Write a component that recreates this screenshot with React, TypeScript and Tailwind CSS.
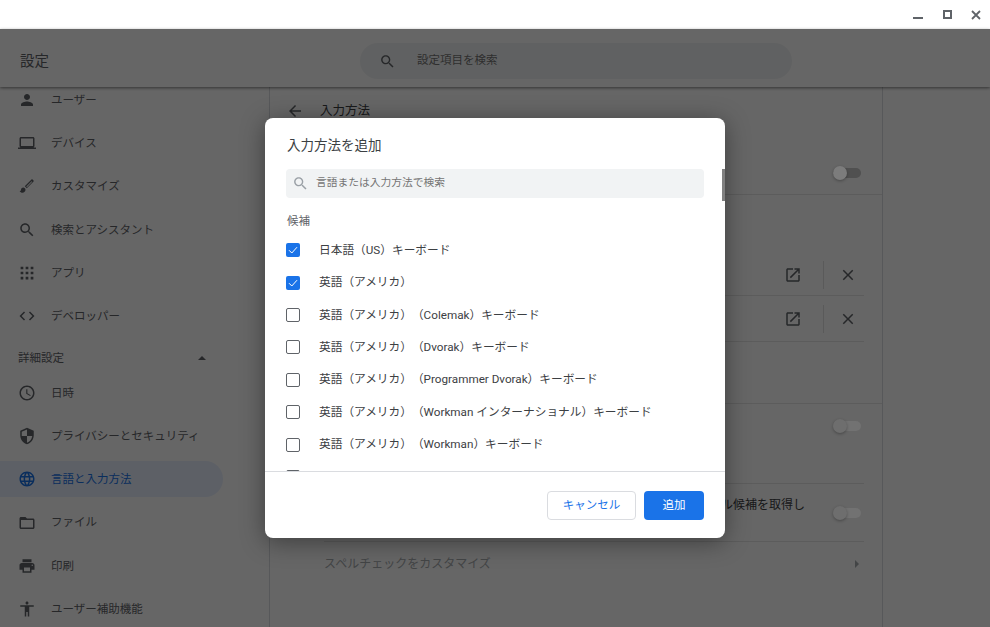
const FONT = "font-[Roboto,'Noto_Sans_CJK_JP',sans-serif] [text-spacing-trim:space-all]"

const paths = {
  person: 'M12 12c2.21 0 4-1.79 4-4s-1.79-4-4-4-4 1.79-4 4 1.79 4 4 4zm0 2c-2.67 0-8 1.34-8 4v2h16v-2c0-2.66-5.33-4-8-4z',
  laptop: 'M20 18c1.1 0 1.99-.9 1.99-2L22 6c0-1.1-.9-2-2-2H4c-1.1 0-2 .9-2 2v10c0 1.1.9 2 2 2H0v2h24v-2h-4zM4 6h16v10H4V6z',
  brush: 'M7 14c-1.66 0-3 1.34-3 3 0 1.31-1.16 2-2 2 .92 1.22 2.49 2 4 2 2.21 0 4-1.79 4-4 0-1.66-1.34-3-3-3zm13.71-9.37l-1.34-1.34c-.39-.39-1.02-.39-1.41 0L9 12.25 11.75 15l8.96-8.96c.39-.39.39-1.02 0-1.41zM11.1 12.8l.8.8 7.1-7.2-.8-.8z',
  search: 'M15.5 14h-.79l-.28-.27C15.41 12.59 16 11.11 16 9.5 16 5.91 13.09 3 9.5 3S3 5.91 3 9.5 5.91 16 9.5 16c1.61 0 3.09-.59 4.23-1.57l.27.28v.79l5 4.99L20.49 19l-4.99-5zm-6 0C7.01 14 5 11.99 5 9.5S7.01 5 9.5 5 14 7.01 14 9.5 11.99 14 9.5 14z',
  code: 'M9.4 16.6L4.8 12l4.6-4.6L8 6l-6 6 6 6 1.4-1.4zm5.2 0l4.6-4.6-4.6-4.6L16 6l6 6-6 6-1.4-1.4z',
  clock: 'M11.99 2C6.47 2 2 6.48 2 12s4.47 10 9.99 10C17.52 22 22 17.52 22 12S17.52 2 11.99 2zM12 20c-4.42 0-8-3.58-8-8s3.58-8 8-8 8 3.58 8 8-3.58 8-8 8zm.5-13H11v6l5.25 3.15.75-1.23-4.5-2.67z',
  shield: 'M12 1L3 5v6c0 5.55 3.84 10.74 9 12 5.16-1.26 9-6.45 9-12V5l-9-4zm0 10.99h7c-.53 4.12-3.28 7.79-7 8.94V12H5V6.3l7-3.11v8.8z',
  globe: 'M11.99 2C6.47 2 2 6.48 2 12s4.47 10 9.99 10C17.52 22 22 17.52 22 12S17.52 2 11.99 2zm6.93 6h-2.95c-.32-1.25-.78-2.45-1.38-3.56 1.84.63 3.37 1.91 4.33 3.56zM12 4.04c.83 1.2 1.48 2.53 1.91 3.96h-3.82c.43-1.43 1.08-2.76 1.91-3.96zM4.26 14C4.1 13.36 4 12.69 4 12s.1-1.36.26-2h3.38c-.08.66-.14 1.32-.14 2 0 .68.06 1.34.14 2H4.26zm.82 2h2.95c.32 1.25.78 2.45 1.38 3.56-1.84-.63-3.37-1.9-4.33-3.56zm2.95-8H5.08c.96-1.66 2.49-2.93 4.33-3.56C8.81 5.55 8.35 6.75 8.03 8zM12 19.96c-.83-1.2-1.48-2.53-1.91-3.96h3.82c-.43 1.43-1.08 2.76-1.91 3.96zM14.34 14H9.66c-.09-.66-.16-1.32-.16-2 0-.68.07-1.35.16-2h4.68c.09.65.16 1.32.16 2 0 .68-.07 1.34-.16 2zm.25 5.56c.6-1.11 1.06-2.31 1.38-3.56h2.95c-.96 1.65-2.49 2.93-4.33 3.56zM16.36 14c.08-.66.14-1.32.14-2 0-.68-.06-1.34-.14-2h3.38c.16.64.26 1.31.26 2s-.1 1.36-.26 2h-3.38z',
  folder: 'M20 6h-8l-2-2H4c-1.1 0-1.99.9-1.99 2L2 18c0 1.1.9 2 2 2h16c1.1 0 2-.9 2-2V8c0-1.1-.9-2-2-2zm0 12H4V8h16v10z',
  print: 'M19 8H5c-1.66 0-3 1.34-3 3v6h4v4h12v-4h4v-6c0-1.66-1.34-3-3-3zm-3 11H8v-5h8v5zm3-7c-.55 0-1-.45-1-1s.45-1 1-1 1 .45 1 1-.45 1-1 1zm-1-9H6v4h12V3z',
  access: 'M12 2c1.1 0 2 .9 2 2s-.9 2-2 2-2-.9-2-2 .9-2 2-2zm9 7h-6v13h-2v-6h-2v6H9V9H3V7h18v2z',
  open: 'M19 19H5V5h7V3H5c-1.11 0-2 .9-2 2v14c0 1.1.89 2 2 2h14c1.1 0 2-.9 2-2v-7h-2v7zM14 3v2h3.59l-9.83 9.83 1.41 1.41L19 6.41V10h2V3h-7z',
  close: 'M19 6.41L17.59 5 12 10.59 6.41 5 5 6.41 10.59 12 5 17.59 6.41 19 12 13.41 17.59 19 19 17.59 13.41 12z',
  back: 'M20 11H7.83l5.59-5.59L12 4l-8 8 8 8 1.41-1.41L7.83 13H20v-2z',
  apps: 'M3.5 3.5h3.6v3.6H3.5zM10.2 3.5h3.6v3.6h-3.6zM16.9 3.5h3.6v3.6h-3.6zM3.5 10.2h3.6v3.6H3.5zM10.2 10.2h3.6v3.6h-3.6zM16.9 10.2h3.6v3.6h-3.6zM3.5 16.9h3.6v3.6H3.5zM10.2 16.9h3.6v3.6h-3.6zM16.9 16.9h3.6v3.6h-3.6z',
}

type IconName = keyof typeof paths

const Icon = ({ name, className }: { name: IconName; className: string }) => (
  <svg viewBox="0 0 24 24" fill="currentColor" className={className}>
    <path fillRule="evenodd" d={paths[name]} />
  </svg>
)

const topNav: { icon: IconName; label: string }[] = [
  { icon: 'person', label: 'ユーザー' },
  { icon: 'laptop', label: 'デバイス' },
  { icon: 'brush', label: 'カスタマイズ' },
  { icon: 'search', label: '検索とアシスタント' },
  { icon: 'apps', label: 'アプリ' },
  { icon: 'code', label: 'デベロッパー' },
]

const advancedNav: { icon: IconName; label: string; active?: boolean }[] = [
  { icon: 'clock', label: '日時' },
  { icon: 'shield', label: 'プライバシーとセキュリティ' },
  { icon: 'globe', label: '言語と入力方法', active: true },
  { icon: 'folder', label: 'ファイル' },
  { icon: 'print', label: '印刷' },
  { icon: 'access', label: 'ユーザー補助機能' },
]

const methods = [
  { label: '日本語（US）キーボード', checked: true },
  { label: '英語（アメリカ）', checked: true },
  { label: '英語（アメリカ）（Colemak）キーボード' },
  { label: '英語（アメリカ）（Dvorak）キーボード' },
  { label: '英語（アメリカ）（Programmer Dvorak）キーボード' },
  { label: '英語（アメリカ）（Workman インターナショナル）キーボード' },
  { label: '英語（アメリカ）（Workman）キーボード' },
  { label: '' },
]

const NavRow = ({ icon, label, active }: { icon: IconName; label: string; active?: boolean }) => (
  <div className="h-[43.33px] flex items-center shrink-0">
    <div className={`h-9 w-[223px] flex items-center pl-[18px] gap-[15px] rounded-r-full ${active ? 'bg-[#e8f0fe] text-[#1a73e8]' : 'text-[#5f6368]'}`}>
      <Icon name={icon} className="w-[18px] h-[18px] shrink-0" />
      <span className="text-[11.5px] mt-px">{label}</span>
    </div>
  </div>
)

// sits above the dim layer: these switches stay lighter than the dimmed page
const Toggle = ({ dark }: { dark?: boolean }) => (
  <div className={`relative z-[25] w-7 h-[10px] rounded-full shrink-0 ${dark ? 'bg-[#505050]' : 'bg-[#727272]'}`}>
    <div className={`absolute left-0 top-[-2px] w-[14px] h-[14px] rounded-full shadow-[0_1px_3px_rgba(0,0,0,0.3)] ${dark ? 'bg-[#7c7c7c]' : 'bg-[#6e6e6e]'}`} />
  </div>
)

const LangRow = ({ height }: { height: string }) => (
  <div className={`${height} ml-[54px] mr-[18px] pr-[7px] flex items-center justify-end`}>
    <Icon name="open" className="w-[18px] h-[18px] text-[#5f6368]" />
    <div className="w-px h-7 bg-[#e0e0e0] ml-[21px] mr-[15px]" />
    <Icon name="close" className="w-[18px] h-[18px] text-[#5f6368]" />
  </div>
)

const Checkbox = ({ checked }: { checked?: boolean }) =>
  checked ? (
    <div className="w-[14px] h-[14px] rounded-[2px] bg-[#1a73e8] shrink-0 flex items-center justify-center">
      <svg viewBox="0 0 14 14" className="w-[14px] h-[14px]" fill="none" stroke="white" strokeWidth="1">
        <path d="M3 7.2l2.8 2.8L11 4.2" />
      </svg>
    </div>
  ) : (
    <div className="w-[14px] h-[14px] rounded-[2px] border border-[#5f6368] bg-white shrink-0" />
  )

export default function App() {
  return (
    <div className={`relative w-[990px] h-[627px] overflow-hidden bg-white ${FONT}`}>
      {/* title bar */}
      <div className="h-[29px] bg-white flex items-center justify-end text-[#5f6368]">
        <div className="w-[10px] h-[2px] bg-current mt-[7px]" />
        <div className="w-[9px] h-[9px] border-2 border-current ml-[20px]" />
        <svg viewBox="0 0 10 10" className="w-[10px] h-[10px] ml-[19px] mr-[9px]" fill="none" stroke="currentColor" strokeWidth="1.8">
          <path d="M1 1l8 8M9 1l-8 8" />
        </svg>
      </div>

      {/* settings page */}
      <div className="relative z-10 h-[58px] bg-white flex items-center shadow-[0_1px_3px_rgba(0,0,0,0.5)]">
        <div className="w-[360px] pl-5 text-[14.5px] text-[#5f6368] mt-[8px]">設定</div>
        <div className="w-[432px] h-9 rounded-full bg-[#f1f3f4] flex items-center pl-[19px] gap-[21px] mt-[6px]">
          <Icon name="search" className="w-[17px] h-[17px] text-[#5f6368]" />
          <span className="text-[11.5px] text-[#757575]">設定項目を検索</span>
        </div>
      </div>

      <div className="flex h-[540px]">
        <div className="w-[270px] shrink-0 border-r border-[#dadce0] overflow-hidden">
          <div className="-mt-[9px] flex flex-col">
            {topNav.map((item) => (
              <NavRow key={item.label} {...item} />
            ))}
            <div className="h-[33px] shrink-0 flex items-center justify-between pt-[8px] pl-[18px] pr-[63px] text-[#5f6368]">
              <span className="text-[11.5px]">詳細設定</span>
              <div className="w-0 h-0 border-x-[4px] border-x-transparent border-b-[4px] border-b-[#5f6368]" />
            </div>
            {advancedNav.map((item) => (
              <NavRow key={item.label} {...item} />
            ))}
          </div>
        </div>

        <div className="w-[613px] shrink-0 border-r border-[#dadce0] text-[#3c4043]">
          <div className="h-[48px] flex items-center pl-[16px] gap-[16px]">
            <Icon name="back" className="w-[18px] h-[18px] text-[#5f6368]" />
            <span className="text-[12.5px]">入力方法</span>
          </div>
          <div className="h-[60px] flex items-center justify-end pr-[21px] pt-[16px] border-b border-[#e5e5e5]">
            <Toggle dark />
          </div>
          <div className="h-[60px]" />
          <LangRow height="h-[41px] border-b border-[#e5e5e5]" />
          <LangRow height="h-[46px] border-b border-[#e5e5e5]" />
          <div className="h-[62px] border-b border-[#e5e5e5]" />
          <div className="h-[80px] ml-[54px] mr-[18px] border-b border-[#e5e5e5] flex justify-end pt-[17px] pr-[3px]">
            <Toggle />
          </div>
          <div className="h-[58px] ml-[54px] mr-[18px] border-b border-[#e5e5e5] flex items-center pr-[3px] gap-7">
            <span className="flex-1 text-right text-[12px] mb-[15px]">スペル候補を取得し</span>
            <div className="mt-[1px]"><Toggle /></div>
          </div>
          <div className="h-[43px] ml-[54px] mr-[7px] flex items-center justify-between text-[#a8acb0]">
            <span className="text-[12px]">スペルチェックをカスタマイズ</span>
            <div className="w-0 h-0 border-y-[4px] border-y-transparent border-l-[4px] border-l-[#a8acb0] mr-[16px]" />
          </div>
        </div>
      </div>

      {/* dim layer */}
      <div className="absolute inset-x-0 top-[29px] bottom-0 z-20 bg-black/60" />

      {/* dialog */}
      <div className="absolute left-[265px] top-[118px] z-30 w-[460px] h-[420px] bg-white rounded-lg shadow-[0_4px_24px_rgba(0,0,0,0.4)] overflow-hidden flex flex-col">
        <div className="h-[51px] shrink-0 pl-[22px] pt-[3px] flex items-center text-[13.5px] text-[#3c4043]">入力方法を追加</div>
        <div className="relative flex-1 min-h-0 overflow-hidden">
          <div className="ml-[21px] w-[418px] h-[29px] bg-[#f1f3f4] rounded flex items-center pl-[6px] gap-[7px]">
            <Icon name="search" className="w-[17px] h-[17px] text-[#9aa0a6]" />
            <span className="text-[10.75px] text-[#757575]">言語または入力方法で検索</span>
          </div>
          <div className="mt-[15px] pl-[22px] text-[11.5px] text-[#5f6368] leading-[16px]">候補</div>
          <div className="mt-[5px] pl-[21px] flex flex-col">
            {methods.map((m, i) => (
              <div key={i} className="h-[32.4px] shrink-0 flex items-center gap-[19px]">
                <Checkbox checked={m.checked} />
                {m.label && <span className="text-[11.7px] text-[#3c4043] mt-px">{m.label}</span>}
              </div>
            ))}
          </div>
          <div className="absolute right-0 top-0 w-[3px] h-8 bg-[#808080]" />
        </div>
        <div className="h-[67px] shrink-0 border-t border-[#dadce0] flex items-center justify-end pr-[21px] gap-2">
          <button className="w-[89px] h-[29px] rounded border border-[#dadce0] bg-white text-[11.5px] text-[#1a73e8] pt-px">キャンセル</button>
          <button className="w-[60px] h-[29px] rounded bg-[#1a73e8] text-[11.5px] text-white pt-px">追加</button>
        </div>
      </div>
    </div>
  )
}
